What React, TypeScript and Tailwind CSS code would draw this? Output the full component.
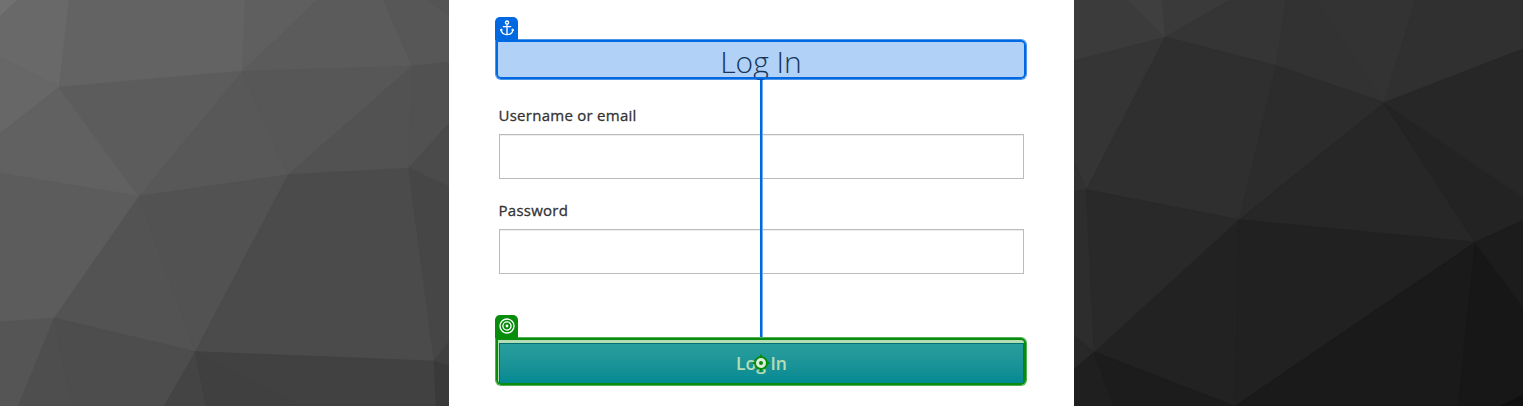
type Facet = [string, string];

const leftFacets: Facet[] = [
  ["0,0 17,0 0,16", "#717171"],
  ["17,0 69,0 59,87 0,57 0,16", "#696969"],
  ["0,57 59,87 0,133", "#676767"],
  ["69,0 245,0 242.5,71 59,87", "#636363"],
  ["245,0 317,0 242.5,71", "#5f5f5f"],
  ["317,0 384,0 412,66 242.5,71", "#5b5b5b"],
  ["384,0 428,0 449,15 449,62 412,66", "#575757"],
  ["428,0 449,0 449,15", "#545454"],
  ["0,133 59,87 139,196 0,173", "#616161"],
  ["59,87 242.5,71 139,196", "#5c5c5c"],
  ["242.5,71 288,174.5 139,196", "#585858"],
  ["242.5,71 412,66 288,174.5", "#575757"],
  ["412,66 408.5,168 288,174.5", "#525252"],
  ["412,66 449,62 449,123 408.5,168", "#515151"],
  ["449,123 449,187 408.5,168", "#4b4b4b"],
  ["0,173 139,196 54,318 0,322", "#5c5c5c"],
  ["139,196 195,351.5 54,318", "#535353"],
  ["139,196 288,174.5 195,351.5", "#525252"],
  ["288,174.5 408.5,168 434,361 195,351.5", "#4b4b4b"],
  ["408.5,168 449,187 449,341 434,361", "#464646"],
  ["0,322 54,318 18,406 0,406", "#555555"],
  ["54,318 72,406 18,406", "#4e4e4e"],
  ["54,318 195,351.5 164,406 72,406", "#4d4d4d"],
  ["195,351.5 206,406 164,406", "#444444"],
  ["195,351.5 303,406 206,406", "#404040"],
  ["195,351.5 434,361 436,406 303,406", "#414141"],
  ["434,361 449,341 449,366", "#404040"],
  ["434,361 449,366 449,406 436,406", "#3a3a3a"],
];

const rightFacets: Facet[] = [
  ["1074,0 1128,0 1165,37 1074,60.5", "#3b3b3b"],
  ["1128,0 1162,0 1165,37", "#3f3f3f"],
  ["1162,0 1229.5,0 1165,37", "#3a3a3a"],
  ["1229.5,0 1285.5,0 1276,65.5 1165,37", "#353535"],
  ["1285.5,0 1316,0 1384,102.5 1276,65.5", "#323232"],
  ["1316,0 1415,0 1384,102.5", "#333333"],
  ["1415,0 1523,0 1523,48.5 1384,102.5", "#303030"],
  ["1074,60.5 1165,37 1086,189.5 1074,163", "#353535"],
  ["1074,163 1086,189.5 1074,191", "#323232"],
  ["1165,37 1276,65.5 1239,219.5 1086,189.5", "#2f2f2f"],
  ["1276,65.5 1384,102.5 1239,219.5", "#2c2c2c"],
  ["1384,102.5 1475,242 1239,219.5", "#272727"],
  ["1384,102.5 1523,197 1523,220 1475,242", "#232323"],
  ["1384,102.5 1523,48.5 1523,197", "#272727"],
  ["1074,191 1086,189.5 1094,352 1074,336", "#2d2d2d"],
  ["1086,189.5 1239,219.5 1094,352", "#292929"],
  ["1239,219.5 1234.5,406 1094,352", "#222222"],
  ["1239,219.5 1475,242 1234.5,406", "#212121"],
  ["1475,242 1458,406 1234.5,406", "#1a1a1a"],
  ["1475,242 1523,307 1523,395 1500,406 1458,406", "#171717"],
  ["1475,242 1523,220 1523,307", "#1c1c1c"],
  ["1074,336 1094,352 1074,369", "#282828"],
  ["1074,369 1094,352 1114,406 1074,406", "#1f1f1f"],
  ["1094,352 1234.5,406 1114,406", "#1c1c1c"],
  ["1500,406 1523,395 1523,406", "#101010"],
];

function Backdrop({ facets, viewBox }: { facets: Facet[]; viewBox: string }) {
  return (
    <svg className="h-[406px] w-[449px] shrink-0" viewBox={viewBox} aria-hidden="true">
      {facets.map(([points, color]) => (
        <polygon key={points} points={points} fill={color} stroke={color} strokeWidth="1.4" strokeLinejoin="round" />
      ))}
    </svg>
  );
}

function AnchorIcon() {
  return (
    <svg className="size-4" viewBox="0 0 16 16" fill="none" stroke="white" strokeWidth="1.3" aria-hidden="true">
      <circle cx="8" cy="2.6" r="1.6" />
      <path d="M8 4.2V15M3.8 6.6h8.4" />
      <path d="M2 9.2C2.3 12.6 4.8 14.6 8 14.6s5.7-2 6-5.4" />
      <path d="M1.4 10.8 2 8.9l1.8 1.3M14.6 10.8 14 8.9l-1.8 1.3" strokeWidth="0.9" />
    </svg>
  );
}

function TargetIcon() {
  return (
    <svg className="size-4" viewBox="0 0 16 16" fill="none" stroke="white" strokeWidth="1.3" aria-hidden="true">
      <circle cx="8" cy="8" r="7" />
      <circle cx="8" cy="8" r="4.1" />
      <circle cx="8" cy="8" r="1.4" fill="white" stroke="none" />
    </svg>
  );
}

function Field({ label, type }: { label: string; type: string }) {
  return (
    <label className="block h-[95px]">
      <span className="-ml-[0.5px] block h-[30px] text-[15px] leading-[22px] tracking-[0.26px] text-[#333] [-webkit-text-stroke:0.3px_#333]">
        {label}
      </span>
      <input
        type={type}
        className="block h-[45px] w-full border border-[#bbb] bg-white px-3 shadow-[inset_0_1px_1px_rgba(0,0,0,0.075)] outline-none"
      />
    </label>
  );
}

export default function App() {
  return (
    <div className="flex h-[406px] w-[1523px] overflow-hidden bg-[#333] font-['Open_Sans',sans-serif]">
      <Backdrop facets={leftFacets} viewBox="-0.5 -0.5 449 406" />
      <main className="relative w-[625px] shrink-0 bg-white px-[50px] pt-[39px]">
        <div className="relative -mx-[4px] h-[41px] w-[532px]">
          <h1 className="pt-[2px] text-center text-[30px] leading-[41px] font-light text-[#222]">Log In</h1>
          <div className="absolute inset-px rounded-[5px] rounded-tl-none border-2 border-[#0068e0] bg-[#0068e0]/30 shadow-[0_0_0_1px_rgba(0,104,224,0.7)]" />
          <div className="absolute -top-[22px] left-0 flex h-[23px] w-[23px] items-center justify-center rounded-t-[5px] bg-[#0068e0] pb-px">
            <AnchorIcon />
          </div>
        </div>
        <form className="pt-[24px]">
          <Field label="Username or email" type="text" />
          <Field label="Password" type="password" />
          <div className="relative -mx-[4px] mt-[43px] h-[49px] w-[532px] p-[4px] pt-[6px]">
            <button
              type="button"
              className="block h-[41px] w-[525px] border border-[#00659c] bg-linear-to-b from-[#39a5dc] to-[#0088ce] text-[17.5px] font-semibold text-white"
            >
              Log In
            </button>
            <div className="absolute inset-px rounded-[5px] rounded-tl-none border-2 border-[#078d0b] bg-[#078d0b]/30 shadow-[0_0_0_1px_rgba(7,141,11,0.7)]" />
            <div className="absolute -top-[22px] left-0 flex h-[23px] w-[23px] items-center justify-center rounded-t-[5px] bg-[#078d0b] pb-px">
              <TargetIcon />
            </div>
            <svg className="absolute top-[17px] left-[256.5px] size-[18px]" viewBox="0 0 18 18" fill="none" stroke="#078d0b" aria-hidden="true">
              <circle cx="9" cy="9" r="6" strokeWidth="2" fill="#dceedd" />
              <path d="M9 .5v3M9 14.5v3M.5 9h3M14.5 9h3" strokeWidth="2" />
              <circle cx="9" cy="9" r="2" fill="#078d0b" stroke="none" />
            </svg>
          </div>
        </form>
        <div className="absolute top-[80px] left-[311px] h-[257px] w-[3px] border-r border-[#73abed] bg-[#0068e0] bg-clip-padding" />
      </main>
      <Backdrop facets={rightFacets} viewBox="1073.5 -0.5 449 406" />
    </div>
  );
}
